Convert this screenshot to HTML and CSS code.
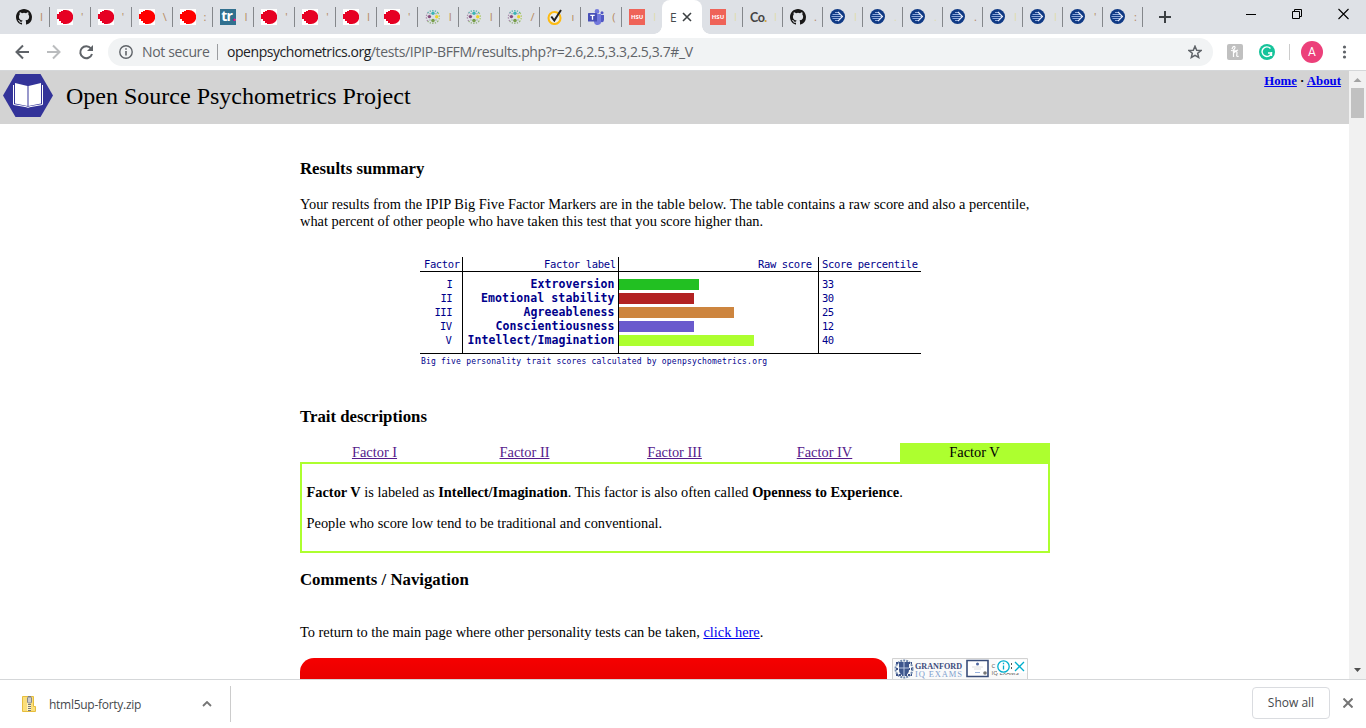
FILE: index.html
```html
<!DOCTYPE html>
<html lang="en">
<head>
<meta charset="utf-8">
<title>Big Five Results</title>
<link rel="stylesheet" href="styles.css">
</head>
<body>
<svg width="0" height="0" class="defs">
  <symbol id="github" viewBox="0 0 16 16"><path fill="#181717" d="M8 0C3.58 0 0 3.58 0 8c0 3.54 2.29 6.53 5.47 7.59.4.07.55-.17.55-.38v-1.49c-2.01.37-2.53-.49-2.69-.94-.09-.23-.48-.94-.82-1.13-.28-.15-.68-.52-.01-.53.63-.01 1.08.58 1.23.82.72 1.21 1.87.87 2.33.66.07-.52.28-.87.51-1.07-1.78-.2-3.64-.89-3.64-3.95 0-.87.31-1.59.82-2.15-.08-.2-.36-1.02.08-2.12 0 0 .67-.21 2.2.82a7.6 7.6 0 0 1 4 0c1.53-1.04 2.2-.82 2.2-.82.44 1.1.16 1.92.08 2.12.51.56.82 1.27.82 2.15 0 3.07-1.87 3.75-3.65 3.95.29.25.54.73.54 1.48v2.2c0 .21.15.46.55.38A8 8 0 0 0 16 8c0-4.42-3.58-8-8-8z"/></symbol>
  <symbol id="blob" viewBox="0 0 16 16"><path fill="#fff" d="M0 0h16v16H0z"/><path fill="currentColor" d="M0 5h2V3h2V2h2V1h3a7 6.800 0 0 1 0 14H6v-1H4v-2H2v-2H0z"/></symbol>
  <symbol id="dots" viewBox="0 0 16 16"><g fill="none" stroke-width="1.300" stroke-dasharray="1.300 1.300"><path d="M2.700 4A6.600 6.600 0 0 1 13 4" stroke="#52b5ad"/><path d="M13 4a6.600 6.600 0 0 1 0 8" stroke="#a8c766"/><path d="M13 12a6.600 6.600 0 0 1-10.300 0" stroke="#93b37c"/><path d="M2.700 12a6.600 6.600 0 0 1 0-8" stroke="#a687a8"/></g><circle cx="8" cy="4.300" r="1.700" fill="#3bb3b5"/><circle cx="4.400" cy="7.600" r="1.700" fill="#844c7c"/><circle cx="11.700" cy="7.800" r="1.700" fill="#ead42b"/><circle cx="8" cy="11.600" r="1.800" fill="#779d48"/><g fill="#8aa6a0"><circle cx="5" cy="4.800" r=".7"/><circle cx="11" cy="4.800" r=".7"/><circle cx="5" cy="11" r=".7"/><circle cx="11" cy="11" r=".7"/></g></symbol>
  <symbol id="norton" viewBox="0 0 16 16"><circle cx="7.500" cy="9" r="6" fill="#eef0ee" stroke="#fdbb14" stroke-width="2.100"/><path d="m4.300 7.500 3 4L14 1" fill="none" stroke="#222" stroke-width="2"/></symbol>
  <symbol id="teams" viewBox="0 0 16 16"><circle cx="9" cy="2.400" r="2.300" fill="#7278dc"/><circle cx="14" cy="3.800" r="1.500" fill="#5158c4"/><path fill="#7278dc" d="M6 5h7v7a3.500 3.500 0 0 1-7 1z"/><path fill="#5158c4" d="M13 6h3v5q-.5 3-3 2z"/><rect y="4" width="9" height="8.500" rx=".6" fill="#4850b8"/><path d="M2.300 6.300h4.400M4.500 6.300v4.500" stroke="#fff" stroke-width="1.300"/></symbol>
  <symbol id="arrow" viewBox="0 0 16 16"><circle cx="7.500" cy="7.500" r="7.500" fill="#103a85"/><path d="M1.500 7.500H12M2.500 5.500h8M2.500 9.500h8M5 3.500h3.500M5 11.500h3.500" stroke="#9db4e2" stroke-width=".9"/><path d="m8 3 4.500 4.500L8 12" fill="none" stroke="#e8eefb" stroke-width="1.100"/></symbol>
</svg>

<header class="tabs">
  <div class="group wide">
    <div class="tab"><svg><use href="#github"/></svg><i>I</i></div>
    <div class="tab crimson"><svg><use href="#blob"/></svg><i>'</i></div>
    <div class="tab crimson"><svg><use href="#blob"/></svg><i>'</i></div>
    <div class="tab red"><svg><use href="#blob"/></svg><i>\</i></div>
    <div class="tab red"><svg><use href="#blob"/></svg><i>:</i></div>
    <div class="tab"><div class="icon tr">tr<em>.</em></div><i>I</i></div>
    <div class="tab crimson"><svg><use href="#blob"/></svg><i>'</i></div>
    <div class="tab crimson"><svg><use href="#blob"/></svg><i>'</i></div>
    <div class="tab crimson"><svg><use href="#blob"/></svg><i>I</i></div>
    <div class="tab crimson"><svg><use href="#blob"/></svg><i>'</i></div>
    <div class="tab"><svg><use href="#dots"/></svg><i>I</i></div>
    <div class="tab"><svg><use href="#dots"/></svg><i>I</i></div>
    <div class="tab"><svg><use href="#dots"/></svg><i>/</i></div>
    <div class="tab"><svg><use href="#norton"/></svg><i>ı</i></div>
    <div class="tab"><svg><use href="#teams"/></svg><i>(</i></div>
    <div class="tab bare"><div class="icon hsu">HSU</div><i class="pale">I</i></div>
  </div>
  <div class="active"><span>E</span><svg viewBox="0 0 10 10"><path d="m1 1 8 8M9 1 1 9" stroke="#3c4043" stroke-width="1.6"/></svg></div>
  <div class="group">
    <div class="tab"><div class="icon hsu">HSU</div><i class="pale">I</i></div>
    <div class="tab"><div class="icon co">Co<em>.</em></div><i class="pale">I</i></div>
    <div class="tab"><svg><use href="#github"/></svg><i>.</i></div>
    <div class="tab"><svg><use href="#arrow"/></svg><i class="pale">I</i></div>
    <div class="tab"><svg><use href="#arrow"/></svg><i class="pale">.</i></div>
    <div class="tab"><svg><use href="#arrow"/></svg><i class="pale">.</i></div>
    <div class="tab"><svg><use href="#arrow"/></svg><i>.</i></div>
    <div class="tab"><svg><use href="#arrow"/></svg><i class="pale">I</i></div>
    <div class="tab"><svg><use href="#arrow"/></svg><i class="pale">I</i></div>
    <div class="tab"><svg><use href="#arrow"/></svg><i>'</i></div>
    <div class="tab"><svg><use href="#arrow"/></svg><i>:</i></div>
  </div>
  <svg class="plus" viewBox="0 0 12 12"><path d="M6 0v12M0 6h12" stroke="#3c4043" stroke-width="2"/></svg>
  <svg class="window" viewBox="0 0 106 14"><g fill="none" stroke="#000"><path d="M0 7.500h10"/><path d="M46.500 4.500h7v7h-7zM48.500 4v-1.500h7v7H54"/><path d="m92.500 2 10 10M102.500 2l-10 10" stroke-width="1.100"/></g></svg>
</header>

<nav class="toolbar">
  <svg class="nav-icons" viewBox="0 0 80 16"><g fill="none" stroke-width="2"><path stroke="#5f6368" d="M15 8H3M9 1.500 2.500 8 9 14.500"/><path stroke="#babcbe" d="M33 8h12M39 1.500 45.500 8 39 14.500"/><path stroke="#5f6368" d="M77 4.500A6 6 0 1 0 78 10"/></g><path fill="#5f6368" d="M79 1v6h-6z"/></svg>
  <div class="address">
    <svg class="info" viewBox="0 0 14 14"><circle cx="7" cy="7" r="6.200" fill="none" stroke="#5f6368" stroke-width="1.400"/><path d="M7 6v4.500M7 3.200v1.600" stroke="#5f6368" stroke-width="1.600"/></svg>
    <span class="insecure">Not secure</span>
    <span class="url"><b>openpsychometrics.org</b>/tests/IPIP-BFFM/results.php?r=2.6,2.5,3.3,2.5,3.7#_V</span>
    <svg class="star" viewBox="0 0 14 14"><path d="m7 1.200 1.700 4 4.300.3-3.300 2.800 1 4.200L7 10.300l-3.700 2.200 1-4.200L1 5.500l4.300-.3z" fill="none" stroke="#5f6368" stroke-width="1.500"/></svg>
  </div>
  <svg class="extensions" viewBox="0 0 126 22"><rect y="3" width="16" height="16" rx="2" fill="#c0c0c0"/><path d="M5 8q1-3 2.500-2.500T6.500 9v7M4 9.500q4 1 7-.5M6.500 12q3-3 3.500-.5l-.3 3.500q.8 1 1.800 0" fill="none" stroke="#fff" stroke-width="1.200"/><circle cx="40" cy="11" r="8" fill="#15c39a"/><path d="M43.500 7.500a4.800 4.800 0 1 0 1 4.500h-3.500M44.500 11v4" fill="none" stroke="#fff" stroke-width="1.400"/><path d="M62.500 3v16" stroke="#ccc"/><circle cx="85" cy="11" r="11" fill="#ec407a"/><text x="85" y="15" class="avatar">A</text><g fill="#5f6368"><circle cx="117.500" cy="6" r="1.600"/><circle cx="117.500" cy="11" r="1.600"/><circle cx="117.500" cy="16" r="1.600"/></g></svg>
</nav>

<section class="viewport">
  <div class="page">
    <div class="site-head">
      <svg class="logo" viewBox="0 0 50 43"><path fill="#333399" d="M12.500 0h25L50 21.500 37.500 43h-25L0 21.500z"/><path fill="#fff" d="m12 9 12.500 3v20L12 29.500zM38 9l-12.500 3v20L38 29.500z"/><path d="M10.500 11v19.500l12.500 2.200q2 1.300 4 0l12.500-2.200V11" fill="none" stroke="#fff"/></svg>
      <div class="site-title"><span>Open Source Psychometrics Project</span></div>
      <div class="site-links"><a>Home</a> · <a>About</a></div>
    </div>
    <main>
      <h2>Results summary</h2>
      <p class="summary">Your results from the IPIP Big Five Factor Markers are in the table below. The table contains a raw score and also a percentile,<br>what percent of other people who have taken this test that you score higher than.</p>
      <svg class="chart" viewBox="0 0 502 112">
        <path d="M0 14.500h501M0 96.500h501M42.500 0v97M198.500 0v97M398.500 0v97" stroke="#000"/>
        <path fill="#22c022" d="M199 22h80v11h-80z"/><path fill="#b22222" d="M199 36h75v11h-75z"/><path fill="#cd853f" d="M199 50h115v11H199z"/><path fill="#6a5acd" d="M199 64h75v11h-75z"/><path fill="#adff2f" d="M199 78h135v11H199z"/>
        <g class="regular">
          <text x="4" y="11" textLength="36">Factor</text><text x="124" y="11" textLength="72">Factor label</text><text x="338" y="11" textLength="54">Raw score</text><text x="402" y="11" textLength="96">Score percentile</text>
          <text x="26.500" y="31">I</text><text x="20.500" y="45" textLength="12">II</text><text x="14.500" y="59" textLength="18">III</text><text x="20" y="73" textLength="12">IV</text><text x="25.500" y="87">V</text>
          <text x="402" y="31" textLength="12">33</text><text x="402" y="45" textLength="12">30</text><text x="402" y="59" textLength="12">25</text><text x="402" y="73" textLength="12">12</text><text x="402" y="87" textLength="12">40</text>
        </g>
        <g class="bold">
          <text x="110.500" y="31" textLength="84">Extroversion</text><text x="61" y="45" textLength="133.500">Emotional stability</text><text x="103.500" y="59" textLength="91">Agreeableness</text><text x="75.500" y="73" textLength="119">Conscientiousness</text><text x="47.500" y="87" textLength="147">Intellect/Imagination</text>
        </g>
        <text x="1" y="107" class="tiny" textLength="346">Big five personality trait scores calculated by openpsychometrics.org</text>
      </svg>
      <h2>Trait descriptions</h2>
      <div class="factors"><a>Factor I</a><a>Factor II</a><a>Factor III</a><a>Factor IV</a><span>Factor V</span></div>
      <div class="trait"><p class="t1"><b>Factor V</b> is labeled as <b>Intellect/Imagination</b>. This factor is also often called <b>Openness to Experience</b>.</p><p class="t2">People who score low tend to be traditional and conventional.</p></div>
      <h2>Comments / Navigation</h2>
      <p class="return">To return to the main page where other personality tests can be taken, <a>click here</a>.</p>
      <div class="ads">
        <div class="red-ad"></div>
        <svg class="banner" viewBox="0 0 136 21"><path d="M.5 21V.5h135V21" fill="#fafafa" stroke="#d2d2d2"/><g fill="none" stroke="#3d5188" stroke-width="2" stroke-dasharray="2 1"><circle cx="12" cy="11" r="8.500" stroke="#7189ad"/><path d="M4 5h16M4 17h16M4 11h16"/></g><path d="M7 4h10v8q0 4-5 6-5-2-5-6z" fill="#3e568d"/><path d="M12 4v14M7 10h10" stroke="#b9c8e2"/><text x="23" y="10.500" class="granford" textLength="47" lengthAdjust="spacingAndGlyphs">GRANFORD</text><text x="23" y="18.500" class="iq" textLength="47">IQ EXAMS</text><path d="M75 2.500h21v16H75z" fill="#fff" stroke="#394d79" stroke-width="1.600"/><circle cx="85.500" cy="6" r="1.500" fill="#4d659e"/><path d="M80 9h11M82 11h7" stroke="#ddd"/><path d="M83 14.500h5" stroke="#9ab4df"/><circle cx="93" cy="15" r="1.800" fill="#777"/><text x="99.500" y="10" class="cert">C</text><text x="99.500" y="17" class="cert">IQ EXAMS</text><path fill="#fff" d="M105 2h30v13h-30z"/><g fill="none" stroke="#00aecd" stroke-width="1.300"><circle cx="111.500" cy="8.500" r="5.700"/><path d="M111.500 7.500v4M111.500 4.700v1.500M123 4l9 9M132 4l-9 9"/></g><path d="M119.500 5v2m0 2v2" stroke="#555"/></svg>
      </div>
    </main>
  </div>
  <div class="scroll"><svg viewBox="0 0 17 17"><path fill="#a3a3a3" d="m4.500 11 4-4 4 4z"/></svg><div class="thumb"></div><svg class="down" viewBox="0 0 17 17"><path fill="#505050" d="m5 6 3.500 4L12 6z"/></svg></div>
</section>

<footer class="downloads">
  <div class="file"><svg class="zip" viewBox="0 0 14 16"><path d="M.5.500h11v10h2v5H.500z" fill="#fbdf7b" stroke="#e6bd3d"/><path d="M7 1v14" stroke="#fff3bd" stroke-width="4"/><path d="M7.500 0v16" stroke="#777" stroke-width="3" stroke-dasharray="1 1"/><rect x="5.500" y="1" width="4" height="6" rx="1" fill="#ccc" stroke="#888"/></svg><span>html5up-forty.zip</span><svg class="chev" viewBox="0 0 10 6"><path d="m1 5 4-4 4 4" fill="none" stroke="#757575" stroke-width="1.800"/></svg></div>
  <div class="showall"><span>Show all</span></div>
  <svg class="close" viewBox="0 0 10 10"><path d="m.5.500 9 9M9.500.500l-9 9" stroke="#757575" stroke-width="2"/></svg>
</footer>
</body>
</html>
```
FILE: styles.css
```css
* { box-sizing: border-box; }
body { margin: 0; width: 1366px; height: 728px; overflow: hidden; background: #fff; font-family: "Liberation Serif", serif; }
svg { display: block; flex: none; }
.defs { position: absolute; }

.tabs { display: flex; height: 34px; padding-left: 8px; background: #dee1e6; font-family: "Open Sans", sans-serif; }
.group { display: flex; width: 440px; }
.wide { width: 654px; }
.tab { flex: 1; display: flex; align-items: center; position: relative; padding: 0 0 0 8px; }
.tab::after { content: ""; position: absolute; right: -1px; top: 7px; width: 1px; height: 20px; background: #84878b; }
.tab.bare::after, .wide + .active + .group .tab:last-child i::after { display: none; }
.tab svg, .icon { width: 16px; height: 16px; flex: none; }
.tab i { width: 4px; margin-left: 8px; font-style: normal; font-size: 11px; line-height: 16px; color: #b58a60; }
.tab i.pale { color: #dfdcae; }
.crimson { color: #e60023; }
.red { color: #f00; }
.icon { text-align: center; white-space: nowrap; line-height: 16px; font-weight: bold; }
.icon em { font-style: normal; }
.tr { background: #31708f; color: #fff; font-size: 14px; line-height: 14px; letter-spacing: -.8px; }
.tr em { color: #f01482; }
.hsu { background: #ef6358; color: #fff; font-size: 6px; }
.co { color: #444; font-family: Lato, sans-serif; font-size: 12.5px; letter-spacing: -.5px; line-height: 17px; }
.co em { color: #d4a33a; }
.active { width: 40px; display: flex; align-items: center; gap: 7px; padding-left: 8px; background: #fff; border-radius: 8px 8px 0 0; color: #45494d; font-size: 12px; position: relative; }
.active::before, .active::after { content: ""; position: absolute; bottom: 0; width: 8px; height: 8px; }
.active::before { left: -8px; background: radial-gradient(circle at 0 0, #dee1e6 7.5px, #fff 8px); }
.active::after { right: -8px; background: radial-gradient(circle at 100% 0, #dee1e6 7.5px, #fff 8px); }
.active span { width: 5px; }
.active svg { width: 10px; height: 10px; }
.plus { width: 12px; height: 12px; margin: 11px 0 0 17px; }
.window { width: 106px; height: 14px; margin: 7px 0 0 75px; }

.toolbar { display: flex; align-items: center; height: 36px; font-family: "Open Sans", sans-serif; }
.nav-icons { width: 80px; height: 16px; margin: 0 14px; }
.address { display: flex; align-items: center; width: 1105px; height: 28px; padding: 0 11px; border-radius: 14px; background: #f1f3f4; color: #5f6368; font-size: 14px; line-height: 28px; white-space: nowrap; }
.info { width: 14px; height: 14px; margin-right: 9px; }
.insecure { width: 76px; border-right: 1px solid #9b9da0; line-height: 16px; letter-spacing: -.35px; }
.url { margin-left: 9px; letter-spacing: -.37px; }
.url b { font-weight: normal; color: #202124; letter-spacing: -.45px; }
.star { width: 14px; height: 14px; margin-left: auto; }
.extensions { width: 126px; height: 22px; margin-left: 14px; }
.avatar { font: 12px Roboto, sans-serif; fill: #fff; text-anchor: middle; }

.viewport { display: flex; height: 609px; border-top: 1px solid #d5d7d9; overflow: hidden; }
.page { width: 1349px; overflow: hidden; }
.site-head { display: flex; height: 53px; padding: 3px 8px 0 3px; background: #d3d3d3; }
.logo { width: 50px; height: 43px; }
.site-title { margin-left: 13px; font-size: 24px; line-height: 44px; }
.site-links { margin-left: auto; font-size: 12.8px; font-weight: bold; line-height: 15px; }
a { color: #00e; text-decoration: underline; }
main { width: 750px; margin-left: 300px; padding-top: 35px; }
h2, p { margin: 0; }
h2 { font-size: 16.8px; line-height: 20px; }
p { font-size: 14.4px; line-height: 17px; white-space: nowrap; }
.summary { margin-top: 17px; }
.chart { width: 502px; height: 112px; margin: 27px 0 38px 120px; font-family: "DejaVu Sans Mono", monospace; fill: #00008b; }
.regular { font-size: 10.5px; }
.bold { font-size: 11.500px; font-weight: bold; }
.tiny { font-size: 8px; }
.factors { display: flex; margin-top: 16px; height: 20px; font-size: 14.4px; line-height: 19px; text-align: center; }
.factors > * { flex: 1; padding-right: 1px; }
.factors a { color: #551a8b; }
.factors span { background: #adff2f; }
.trait { height: 91px; margin-bottom: 17px; margin-top: -1px; padding: 20px 4.5px; border: 2px solid #adff2f; }
.t2 { margin-top: 14px; }
.return { margin-top: 34px; }
.ads { display: flex; gap: 5px; margin-top: 17px; height: 21px; }
.red-ad { width: 587px; height: 21px; border-radius: 14px 14px 0 0; background: linear-gradient(#f60000, #e90000); }
.banner { width: 136px; height: 21px; }
.granford { font: bold 8px "Liberation Serif", serif; fill: #3c4c7d; }
.iq { font: 8.5px "Liberation Serif", serif; fill: #7fa0ce; }
.cert { font: 6px "Open Sans", sans-serif; fill: #555; }
.scroll { display: flex; flex-direction: column; width: 17px; background: #f1f1f1; }
.scroll svg { width: 17px; height: 17px; }
.thumb { width: 13px; height: 30px; margin-left: 2px; background: #c1c1c1; }
.scroll .down { margin-top: auto; }

.downloads { display: flex; height: 49px; border-top: 1px solid #d5d7d9; font-family: "Open Sans", sans-serif; font-size: 12px; color: #45494d; }
.file { display: flex; align-items: center; width: 231px; height: 36px; margin-top: 6px; padding-left: 22px; border-right: 1px solid #ccc; }
.file span { letter-spacing: -.28px; }
.zip { width: 14px; height: 16px; margin-right: 13px; }
.chev { width: 10px; height: 6px; margin: 0 18px 0 auto; }
.showall { width: 78px; height: 32px; margin: 7px 13px 0 auto; border: 1px solid #dadce0; border-radius: 4px; text-align: center; line-height: 30px; }
.close { width: 10px; height: 10px; margin: 18px 13px 0 0; }
```
